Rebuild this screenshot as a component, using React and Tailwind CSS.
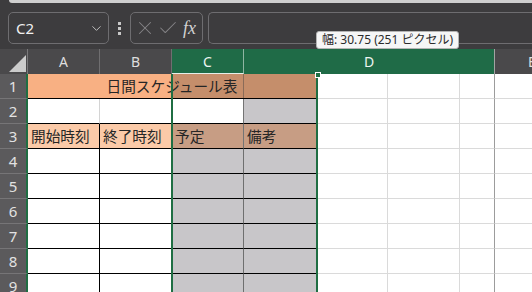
import React from 'react';
import { ChevronDown, X, Check } from 'lucide-react';

const jp = { fontFamily: '"Noto Sans CJK JP", "Noto Sans", sans-serif' };
const ui = { fontFamily: '"Noto Sans", "Noto Sans CJK JP", sans-serif' };

function RowHead({ n }) {
  return (
    <div className="w-[28px] shrink-0 h-full bg-[#5b5a5c] border-b border-[#767577] border-r-2 border-r-[#1f6e43] flex items-center justify-center text-[15px] text-[#e2e2e2]" style={ui}>
      {n}
    </div>
  );
}

// white cells to the right of the selection (plain gridlines)
function Rest() {
  return (
    <>
      <div className="w-[72px] shrink-0 h-full bg-white border-r border-b border-[#dadada]" />
      <div className="w-[72px] shrink-0 h-full bg-white border-r border-b border-[#dadada]" />
      <div className="w-[35px] shrink-0 h-full bg-white border-r border-r-[#9c9c9c] border-b border-b-[#dadada]" />
      <div className="flex-1 h-full bg-white border-b border-[#dadada]" />
    </>
  );
}

function Row({ n, children }) {
  return (
    <div className="flex h-[25px] shrink-0">
      <RowHead n={n} />
      {children}
      <Rest />
    </div>
  );
}

export default function App() {
  return (
    <div className="relative w-[532px] h-[292px] overflow-hidden bg-[#3d3c3e] flex flex-col">
      {/* top strip */}
      <div className="h-[3px] ml-[9px] bg-[#cfcfcf] rounded-bl-[5px] shrink-0" />

      {/* formula bar */}
      <div className="flex items-center mt-[9px] h-[32px] shrink-0 pl-[8px]">
        <div className="w-[101px] h-full rounded-[5px] border border-[#6e6d70] flex items-center justify-between pl-[7px] pr-[4px]">
          <span className="text-[15px] text-[#f0f0f0]" style={ui}>C2</span>
          <ChevronDown size={15} strokeWidth={1.5} color="#c4c4c4" />
        </div>
        <div className="w-[21px] flex flex-col items-center gap-[2px]">
          <div className="w-[3px] h-[3px] bg-[#c8c8c8]" />
          <div className="w-[3px] h-[3px] bg-[#c8c8c8]" />
          <div className="w-[3px] h-[3px] bg-[#c8c8c8]" />
        </div>
        <div className="w-[73px] h-full rounded-[5px] border border-[#6e6d70] flex items-center pl-[3px] gap-[1px]">
          <X size={22} strokeWidth={1.1} color="#858487" />
          <Check size={22} strokeWidth={1.1} color="#858487" />
          <span className="text-[18px] italic text-[#d2d2d2] ml-[3px] leading-none" style={{ fontFamily: '"Liberation Serif", serif' }}>fx</span>
        </div>
        <div className="flex-1 h-full ml-[5px] rounded-l-[5px] border border-r-0 border-[#6e6d70]" />
      </div>

      {/* column headers */}
      <div className="flex h-[25px] mt-[5px] shrink-0 text-[14px]" style={ui}>
        <div className="w-[28px] shrink-0 h-full bg-[#4a494b] border-r border-[#7a797b]">
          <svg width="28" height="25" viewBox="0 0 28 25">
            <polygon points="26,6 26,23 9,23" fill="#cbcbcb" />
          </svg>
        </div>
        <div className="w-[72px] shrink-0 h-full bg-[#4a494b] border-r border-[#6f6e70] flex items-center justify-center text-[#dedede]">A</div>
        <div className="w-[72px] shrink-0 h-full bg-[#4a494b] border-r border-[#6f6e70] flex items-center justify-center text-[#dedede]">B</div>
        <div className="w-[72px] shrink-0 h-full bg-[#1f6b47] border-r border-[#8fb5a2] border-b border-b-[#e6efe9] flex items-center justify-center text-[#eef5f1]">C</div>
        <div className="w-[251px] shrink-0 h-full bg-[#1f6b47] border-r border-r-[#a3a3a3] flex items-center justify-center text-[#eef5f1]">D</div>
        <div className="flex-1 h-full bg-[#4a494b] flex items-center pl-[33px] text-[#dedede]">E</div>
      </div>

      {/* grid */}
      <div className="flex flex-col text-[14.67px] text-[#262626]" style={jp}>
        <Row n={1}>
          <div className="w-[288px] shrink-0 h-full border-b border-black flex items-center justify-center bg-[linear-gradient(to_right,#f8b083_144px,#c58e6b_144px,#c58e6b_215px,#8a6b58_215px,#8a6b58_216px,#c58e6b_216px)]">
            日間スケジュール表
          </div>
        </Row>
        <Row n={2}>
          <div className="w-[72px] shrink-0 h-full bg-white border-r border-r-[#d4d4d4] border-b border-b-black" />
          <div className="w-[72px] shrink-0 h-full bg-white border-b border-black" />
          <div className="w-[72px] shrink-0 h-full bg-white border-r border-r-[#747474] border-b border-b-black" />
          <div className="w-[72px] shrink-0 h-full bg-[#c8c6c9] border-b border-black" />
        </Row>
        <Row n={3}>
          <div className="w-[72px] shrink-0 h-full bg-[#fbcaa8] border-r border-b border-black flex items-center pl-[3px]">開始時刻</div>
          <div className="w-[72px] shrink-0 h-full bg-[#fbcaa8] border-r border-b border-black flex items-center pl-[3px]">終了時刻</div>
          <div className="w-[72px] shrink-0 h-full bg-[#c79d84] border-r border-r-[#747474] border-b border-b-black flex items-center pl-[3px]">予定</div>
          <div className="w-[72px] shrink-0 h-full bg-[#c79d84] border-b border-black flex items-center pl-[3px]">備考</div>
        </Row>
        {[4, 5, 6, 7, 8, 9].map(n => (
          <Row key={n} n={n}>
            <div className="w-[72px] shrink-0 h-full bg-white border-r border-b border-black" />
            <div className="w-[72px] shrink-0 h-full bg-white border-r border-b border-black" />
            <div className="w-[72px] shrink-0 h-full bg-[#c8c6c9] border-r border-r-[#6f6f6f] border-b border-b-black" />
            <div className="w-[72px] shrink-0 h-full bg-[#c8c6c9] border-b border-black" />
          </Row>
        ))}
      </div>

      {/* selection outline + fill handle */}
      <div className="absolute left-[171px] top-[74px] w-[147px] h-[230px] border-x-2 border-[#1f6e43]" />
      <div className="absolute left-[315px] top-[72px] w-[6px] h-[6px] bg-[#1f6e43] border border-white" />

      {/* resize tooltip */}
      <div className="absolute left-[316px] top-[31px] h-[18px] px-[5px] flex items-center bg-[#f6f6f6] border border-[#b4b4b4] rounded-[3px] text-[12px] text-[#2b2b2b] whitespace-nowrap" style={ui}>
        幅: 30.75 (251 ピクセル)
      </div>
    </div>
  );
}
